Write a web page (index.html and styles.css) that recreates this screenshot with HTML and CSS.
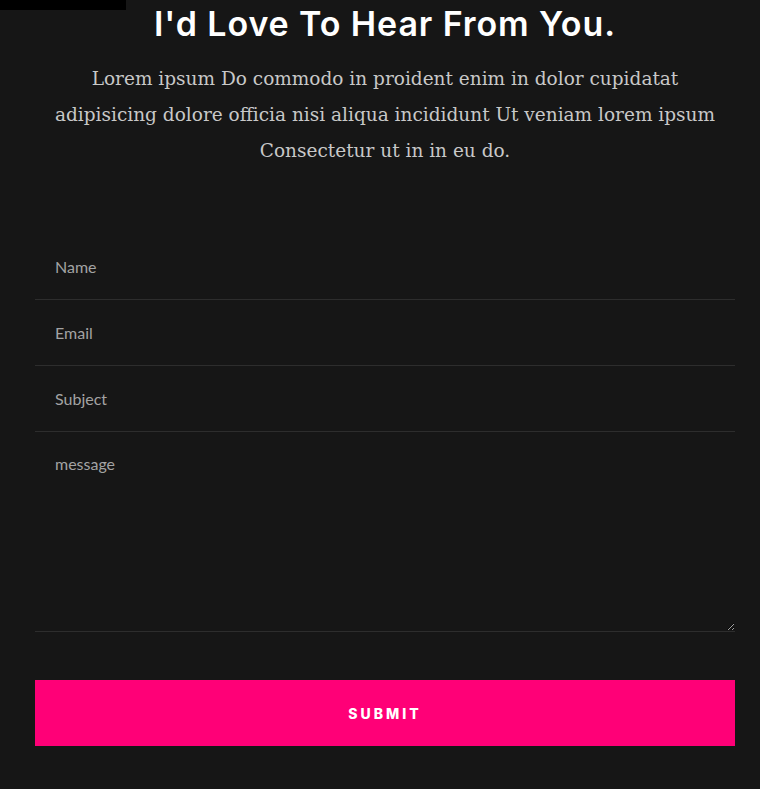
FILE: index.html
```html
<!DOCTYPE html>
<html lang="en">
<head>
<meta charset="utf-8">
<title>Contact</title>
<link rel="stylesheet" href="styles.css">
</head>
<body>
<div class="topbar"></div>
<section class="contact">
  <h1 class="title">I'd Love To Hear From You.</h1>
  <p class="lead">Lorem ipsum Do commodo in proident enim in dolor cupidatat adipisicing dolore officia nisi aliqua incididunt Ut veniam lorem ipsum Consectetur ut in in eu do.</p>
  <form class="form">
    <input class="field" type="text" placeholder="Name">
    <input class="field" type="email" placeholder="Email">
    <input class="field" type="text" placeholder="Subject">
    <textarea class="field area" placeholder="message"></textarea>
    <button class="submit" type="button">Submit</button>
  </form>
</section>
</body>
</html>
```
FILE: styles.css
```css
html, body {
  margin: 0;
  padding: 0;
  background: #161616;
}
body {
  position: relative;
  height: 789px;
  overflow: hidden;
}
.topbar {
  position: absolute;
  left: 0;
  top: 0;
  width: 126px;
  height: 10px;
  background: #000;
}
.contact {
  width: 700px;
  margin-left: 35px;
  display: flex;
  flex-direction: column;
}
.title {
  margin: 0;
  padding-top: 2px;
  font-family: Inter, "Open Sans", sans-serif;
  font-weight: 600;
  font-size: 34px;
  letter-spacing: 0.9px;
  line-height: 44px;
  color: #fff;
  text-align: center;
}
.lead {
  margin: 15px auto 0;
  width: 684px;
  font-family: "DejaVu Serif", serif;
  font-size: 18.5px;
  line-height: 36px;
  color: #c8c8c8;
  text-align: center;
}
.form {
  margin-top: 65px;
  display: flex;
  flex-direction: column;
}
.field {
  display: block;
  box-sizing: border-box;
  width: 100%;
  height: 66px;
  margin: 0;
  padding: 0 20px;
  background: transparent;
  border: 0;
  border-bottom: 1px solid #2d2d2d;
  outline: none;
  font-family: Lato, "Noto Sans", sans-serif;
  font-size: 16px;
  color: #ddd;
}
.field::placeholder {
  color: #a3a3a3;
}
.area {
  height: 200px;
  padding: 22px 20px;
  resize: vertical;
}
.submit {
  margin-top: 48px;
  height: 66px;
  border: 0;
  background: #ff0077;
  color: #fff;
  font-family: Inter, "Open Sans", sans-serif;
  font-weight: 800;
  font-size: 14px;
  letter-spacing: 3px;
  text-transform: uppercase;
  cursor: pointer;
}
```
